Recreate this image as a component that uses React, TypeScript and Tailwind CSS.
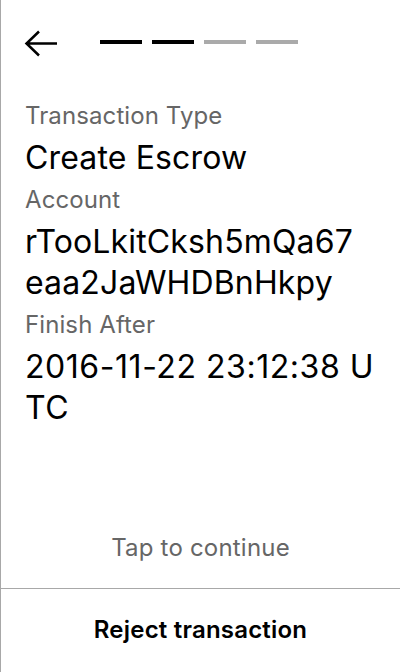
import React from "react";

export default function App() {
  const font = { fontFamily: "Inter, 'Noto Sans', sans-serif" };
  return (
    <div
      className="w-[400px] h-[672px] flex flex-col bg-white border-l border-[#a8a8a8] text-black"
      style={font}
    >
      <div className="flex-1 flex flex-col">
        <div className="flex items-center h-[30px] mt-[28px] pl-[23px]">
          <svg width="34" height="27" viewBox="0 0 34 27" fill="none">
            <path d="M33 13.5H2.5M15 1.5L2.5 13.5L15 25.5" stroke="#000" strokeWidth="2.5" />
          </svg>
          <div className="flex gap-[10px] ml-[42px] -mt-[3px]">
            <div className="w-[42px] h-[4px] bg-black" />
            <div className="w-[42px] h-[4px] bg-black" />
            <div className="w-[42px] h-[4px] bg-[#aaaaaa]" />
            <div className="w-[42px] h-[4px] bg-[#aaaaaa]" />
          </div>
        </div>
        <div className="pl-[24px] pr-[20px] mt-[36px] flex flex-col">
          <div className="text-[24px] leading-[43px] text-[#666666] tracking-[0.1px]">Transaction Type</div>
          <div className="text-[32px] leading-[41px] tracking-[0.15px]">Create Escrow</div>
          <div className="text-[24px] leading-[43px] text-[#666666] tracking-[0.1px]">Account</div>
          <div className="text-[32px] leading-[41px] tracking-[0.15px]">
            <div>rTooLkitCksh5mQa67</div>
            <div>eaa2JaWHDBnHkpy</div>
          </div>
          <div className="text-[24px] leading-[43px] text-[#666666] tracking-[0.1px]">Finish After</div>
          <div className="text-[32px] leading-[41px] tracking-[0.55px] whitespace-nowrap">
            <div>2016-11-22 23:12:38 U</div>
            <div>TC</div>
          </div>
        </div>
        <div className="mt-auto mb-[22px] text-center text-[24px] text-[#666666] tracking-[0.2px]">Tap to continue</div>
      </div>
      <div className="h-[84px] border-t border-[#a8a8a8] flex items-center justify-center text-[24px] font-semibold tracking-[0.2px] pb-[1px]">
        Reject transaction
      </div>
    </div>
  );
}
